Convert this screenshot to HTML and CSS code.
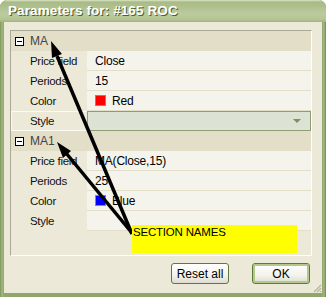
FILE: index.html
```html
<!doctype html>
<html lang="en">
  <head>
    <meta charset="UTF-8" />
    <title>Parameters for: #165 ROC</title>
    <link rel="stylesheet" href="styles.css">
  </head>
  <body>
    <div class="window">
      <div class="titlebar">
        <span class="title">Parameters for: #165 ROC</span>
      </div>

      <div class="client">
        <div class="grid">
          <div class="cat"><span class="toggle"></span>MA</div>
          <div class="row">
            <div class="label">Price field</div>
            <div class="value">Close</div>
          </div>
          <div class="row">
            <div class="label">Periods</div>
            <div class="value">15</div>
          </div>
          <div class="row">
            <div class="label">Color</div>
            <div class="value"><span class="swatch red"></span>Red</div>
          </div>
          <div class="row selected">
            <div class="label">Style</div>
            <div class="value combo"><span class="drop"></span></div>
          </div>

          <div class="cat"><span class="toggle"></span>MA1</div>
          <div class="row">
            <div class="label">Price field</div>
            <div class="value">MA(Close,15)</div>
          </div>
          <div class="row">
            <div class="label">Periods</div>
            <div class="value">25</div>
          </div>
          <div class="row">
            <div class="label">Color</div>
            <div class="value"><span class="swatch blue"></span>Blue</div>
          </div>
          <div class="row">
            <div class="label">Style</div>
            <div class="value"></div>
          </div>
        </div>

        <div class="buttons">
          <button class="btn">Reset all</button>
          <button class="btn default">OK</button>
        </div>

        <svg class="grip" viewBox="0 0 10 10">
          <path d="M9 2L2 9M9 5L5 9M9 8L8 9" stroke="#b8b49c" stroke-width="1.2" />
        </svg>
      </div>

      <!-- annotation drawn over the dialog -->
      <svg class="arrows" viewBox="0 0 326 297">
        <line x1="132" y1="234" x2="57" y2="56" stroke="#000" stroke-width="3.5" />
        <polygon points="51,41 62,54 52,58" fill="#000" />
        <line x1="132" y1="233" x2="66" y2="153" stroke="#000" stroke-width="3.5" />
        <polygon points="57,142 71,151 63,158" fill="#000" />
      </svg>
      <div class="note">SECTION NAMES</div>
    </div>
  </body>
</html>
```

FILE: styles.css
```css
:root {
  --frame: #8fa66c;
  --client: #ece9d8;
  --cat: #e3dec8;
  --cell: #f4f4ec;
  --line: #e3dec8;
}

body {
  margin: 0;
  font-family: 'Liberation Sans', Arial, sans-serif;
  font-size: 11px;
  color: #000;
}

.window {
  position: relative;
  width: 326px;
  height: 297px;
  display: flex;
  flex-direction: column;
  background: linear-gradient(90deg, #7d9558 0, #a3b880 2px, #8fa66c 4px, #8fa66c 322px, #a3b880 324px, #6f8a4a 326px);
  border-radius: 7px 7px 0 0;
  overflow: hidden;
}

.titlebar {
  height: 22px;
  flex: none;
  background: linear-gradient(#dde6c6 0, #a8ba86 2px, #aebf8c 6px, #bccb9c 14px, #b5c594 19px, #a2b57f 22px);
  border-radius: 7px 7px 0 0;
}

.title {
  display: block;
  padding: 3px 0 0 8px;
  font-weight: bold;
  font-size: 13.5px;
  color: #fff;
  text-shadow: 1px 1px 0 #4f5f33;
  letter-spacing: 0.1px;
}

.client {
  position: relative;
  flex: 1;
  margin: 0 4px 4px;
  padding: 8px 10px 0 6px;
  background: var(--client);
}

.grid {
  height: 226px;
  box-sizing: border-box;
  border: 1px solid;
  border-color: #aca899 #fff #fff #aca899;
}

.cat {
  height: 20px;
  display: flex;
  align-items: center;
  gap: 6px;
  padding-left: 4px;
  background: var(--cat);
  color: #454545;
  font-size: 12px;
}

.toggle {
  position: relative;
  width: 9px;
  height: 9px;
  box-sizing: border-box;
  border: 1px solid #000;
  background: #fff;
}

.toggle::after {
  content: '';
  position: absolute;
  left: 1px;
  top: 3px;
  width: 5px;
  height: 1px;
  background: #000;
}

.row {
  display: grid;
  grid-template-columns: 76px 1fr;
  height: 20px;
}

.label,
.value {
  display: flex;
  align-items: center;
  box-sizing: border-box;
  white-space: nowrap;
}

.label {
  padding-left: 19px;
  font-size: 11.5px;
  letter-spacing: -0.3px;
  color: #111;
}

.value {
  padding-left: 8px;
  background: var(--cell);
  border-bottom: 1px solid var(--line);
  font-size: 12px;
  letter-spacing: -0.2px;
}

.selected .label {
  border: 1px solid #fbfaf5;
  border-right: none;
  padding-left: 18px;
}

.value.combo {
  justify-content: flex-end;
  padding-right: 9px;
  background: #dce2d4;
  border: 1px solid #8e9e70;
}

.drop {
  width: 0;
  height: 0;
  border-left: 4px solid transparent;
  border-right: 4px solid transparent;
  border-top: 4px solid #7d905c;
}

.swatch {
  width: 11px;
  height: 11px;
  box-sizing: border-box;
  border: 1px solid #8a8a8a;
  margin-right: 6px;
}

.swatch.red {
  background: #ff0000;
}

.swatch.blue {
  background: #0000ff;
}

.buttons {
  display: flex;
  justify-content: flex-end;
  gap: 23px;
  margin-top: 7px;
  padding-right: 2px;
}

.btn {
  width: 58px;
  height: 21px;
  padding: 0;
  font-family: 'Liberation Sans', Arial, sans-serif;
  font-size: 12px;
  color: #000;
  background: linear-gradient(#ffffff, #f3f2ec 60%, #dedcd0);
  border: 1px solid #5e7a3a;
  border-radius: 3px;
}

.btn.default {
  box-shadow: inset 0 0 0 2px #b4c88e;
}

.grip {
  position: absolute;
  right: 0;
  bottom: 0;
  width: 10px;
  height: 10px;
}

.arrows {
  position: absolute;
  left: 0;
  top: 0;
  width: 326px;
  height: 297px;
}

.note {
  position: absolute;
  left: 132px;
  top: 225px;
  width: 165px;
  height: 28px;
  box-sizing: border-box;
  padding: 1px 0 0 1px;
  background: #ffff00;
  font-size: 11.5px;
  letter-spacing: -0.2px;
}
```
